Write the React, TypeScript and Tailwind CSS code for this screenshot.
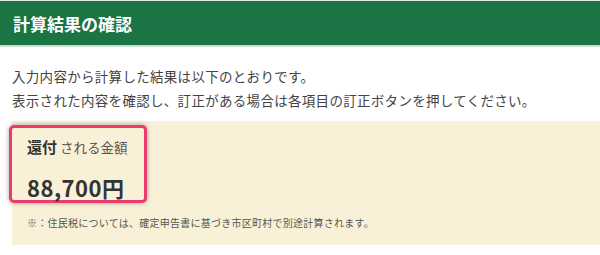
export default function App() {
  const jp = { fontFamily: '"Noto Sans CJK JP", "Noto Sans", sans-serif' };
  return (
    <div className="w-[600px] h-[255px] bg-white overflow-hidden" style={jp}>
      <div className="h-px bg-[#dfe9e2]" />
      <div className="h-[44px] bg-[#1b7443] flex items-center px-[13px]">
        <span className="text-white font-bold text-[17px] leading-none">計算結果の確認</span>
      </div>
      <div className="h-[2px] bg-[#d3ddd7]" />
      <div className="mt-[17px] px-[12px] text-[13.5px] leading-[24px] tracking-[0.3px] text-[#444444]">
        <p>入力内容から計算した結果は以下のとおりです。</p>
        <p>表示された内容を確認し、訂正がある場合は各項目の訂正ボタンを押してください。</p>
      </div>
      <div className="mt-[9px] ml-[12px] bg-[#f9f1d7] pt-[4px] pb-[14px]">
        <div className="-ml-[3px] w-[138px] h-[78px] box-border border-[3px] border-[#ea3b6f] rounded-[5px] bg-[#f9f1d7] shadow-[0_0_5px_rgba(0,0,0,0.35)] pl-[15px] pt-[8px]">
          <div className="leading-[20px] text-[#333333] whitespace-nowrap">
            <span className="font-bold text-[15px]">還付</span>
            <span className="text-[13.5px] text-[#555555]"> される金額</span>
          </div>
          <div className="mt-[15px] leading-[30px] text-[22px] font-bold tracking-[0.5px] text-[#333333] whitespace-nowrap">88,700円</div>
        </div>
        <p className="mt-[12px] pl-[15px] text-[10px] leading-[16px] tracking-[0.25px] text-[#555555] whitespace-nowrap">
          ※：住民税については、確定申告書に基づき市区町村で別途計算されます。
        </p>
      </div>
    </div>
  );
}
